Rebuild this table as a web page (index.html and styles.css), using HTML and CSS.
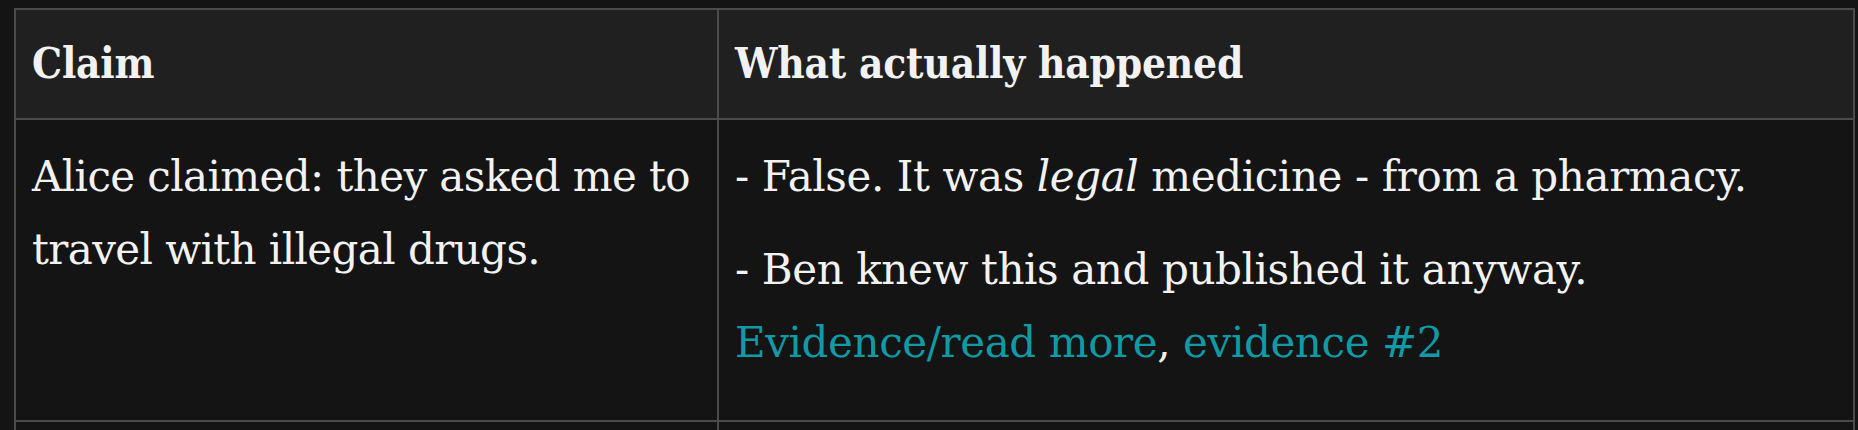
FILE: index.html
```html
<!DOCTYPE html>
<html lang="en">
<head>
<meta charset="utf-8">
<title>Claims</title>
<link rel="stylesheet" href="styles.css">
</head>
<body>
<main class="page">
  <table class="claims">
    <colgroup>
      <col class="col-claim">
      <col class="col-what">
    </colgroup>
    <thead>
      <tr>
        <th>Claim</th>
        <th>What actually happened</th>
      </tr>
    </thead>
    <tbody>
      <tr>
        <td class="claim-cell"><p>Alice claimed: they asked me to travel with illegal drugs.</p></td>
        <td class="what-cell">
          <p>- False. It was <em>legal</em> medicine - from a pharmacy.</p>
          <p>- Ben knew this and published it anyway.<br><a href="#">Evidence/read more</a>, <a href="#">evidence #2</a></p>
        </td>
      </tr>
      <tr class="next-row">
        <td></td>
        <td></td>
      </tr>
    </tbody>
  </table>
</main>
</body>
</html>
```

FILE: styles.css
```css
html, body {
  margin: 0;
  padding: 0;
  background: #141414;
}
.page {
  padding: 8px 3px 0 14px;
  font-family: "DejaVu Serif", "Liberation Serif", serif;
  font-size: 42px;
  color: #f2f2f2;
}
.claims {
  width: 100%;
  border-collapse: collapse;
  border: 2px solid #4b4b4b;
  table-layout: fixed;
}
.col-claim { width: 703px; }
.claims th,
.claims td {
  border: 2px solid #4b4b4b;
  padding: 17px 16px;
  text-align: left;
  vertical-align: top;
  line-height: 73px;
}
.claims th {
  background: #202020;
  font-family: "DejaVu Serif Condensed", "DejaVu Serif", serif;
  font-weight: bold;
  letter-spacing: -0.2px;
  padding-top: 17px;
  padding-bottom: 18px;
}
.claims td {
  background: #141414;
  letter-spacing: -0.6px;
  padding-top: 20px;
  padding-bottom: 21px;
}
.claims td.what-cell {
  letter-spacing: -0.4px;
}
.claims p {
  margin: 0 0 20px 0;
}
.claims em {
  font-style: italic;
}
.claims a {
  color: #109aa6;
  text-decoration: none;
}
.next-row td {
  height: 60px;
  padding: 0;
}
```
